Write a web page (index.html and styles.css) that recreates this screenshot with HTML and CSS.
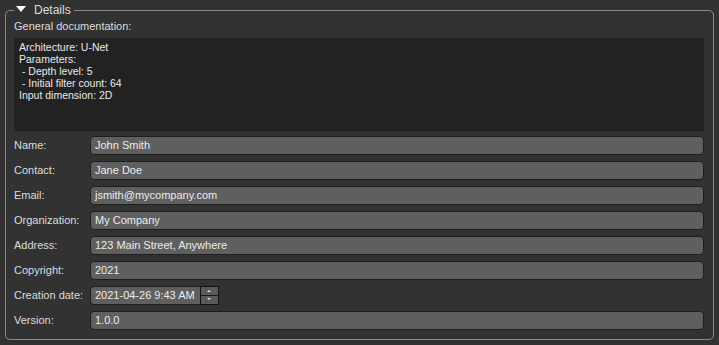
FILE: index.html
```html
<!DOCTYPE html>
<html lang="en">
<head>
    <meta charset="UTF-8">
    <title>Model details</title>
    <link rel="stylesheet" href="styles.css">
</head>
<body>
<fieldset class="details">
    <legend><span class="arrow"></span>Details</legend>
    <div class="doc-label">General documentation:</div>
    <div class="doc">Architecture: U-Net
Parameters:
 - Depth level: 5
 - Initial filter count: 64
Input dimension: 2D</div>
    <div class="form">
        <label>Name:</label>
        <div class="field">John Smith</div>
        <label>Contact:</label>
        <div class="field">Jane Doe</div>
        <label>Email:</label>
        <div class="field">jsmith@mycompany.com</div>
        <label>Organization:</label>
        <div class="field">My Company</div>
        <label>Address:</label>
        <div class="field">123 Main Street, Anywhere</div>
        <label>Copyright:</label>
        <div class="field">2021</div>
        <label>Creation date:</label>
        <div class="date-row">
            <div class="field date">2021-04-26 9:43 AM</div>
            <div class="spin">
                <span class="up"></span>
                <span class="down"></span>
            </div>
        </div>
        <label>Version:</label>
        <div class="field">1.0.0</div>
    </div>
</fieldset>
</body>
</html>
```

FILE: styles.css
```css
body {
    margin: 0;
    background: #323232;
    color: #dcdcdc;
    font-family: "Liberation Sans", Arial, sans-serif;
    font-size: 11px;
    height: 345px;
    overflow: hidden;
}

.details {
    margin: 3px 5px 0 5px;
    height: 337px;
    box-sizing: border-box;
    border: 1px solid #8a8a8a;
    border-radius: 5px;
    padding: 0 8px 0 8px;
}

.details > legend {
    padding: 0 3px 0 2px;
    margin-left: 0;
    font-size: 12px;
    color: #dcdcdc;
    line-height: 14px;
}

.arrow {
    display: inline-block;
    width: 0;
    height: 0;
    border-left: 5px solid transparent;
    border-right: 5px solid transparent;
    border-top: 6px solid #ffffff;
    margin-right: 8px;
    vertical-align: 2px;
}

.doc-label {
    margin-top: 2px;
    height: 15px;
    line-height: 15px;
}

.doc {
    margin-top: 4px;
    height: 93px;
    background: #222222;
    white-space: pre;
    font-size: 10.5px;
    line-height: 12px;
    padding: 3px 5px;
    box-sizing: border-box;
    margin-right: 1px;
    color: #e8e8e8;
}

.form {
    margin-top: 5px;
    display: grid;
    grid-template-columns: 76px 1fr;
    row-gap: 6px;
    align-items: center;
    margin-right: 1px;
}

.form > label {
    line-height: 19px;
}

.field {
    height: 19px;
    box-sizing: border-box;
    background: #5f5f5f;
    border: 1px solid #1e1e1e;
    border-radius: 4px;
    padding: 0 4px;
    line-height: 17px;
    color: #ececec;
}

.date-row {
    display: flex;
    align-items: center;
}

.field.date {
    width: 110px;
    border-radius: 4px 0 0 4px;
    border-right: none;
}

.spin {
    width: 17px;
    height: 17px;
    border: 1px solid #111;
    background: #1a1a1a;
    display: flex;
    flex-direction: column;
    gap: 1px;
    padding: 0;
}

.spin > span {
    flex: 1;
    background: #5a5a5a;
    position: relative;
}

.spin .up::after,
.spin .down::after {
    content: "";
    position: absolute;
    left: 6px;
    top: 3px;
    border-left: 2px solid transparent;
    border-right: 2px solid transparent;
}

.spin .up::after {
    border-bottom: 2px solid #e0e0e0;
}

.spin .down::after {
    top: 2px;
    border-top: 2px solid #e0e0e0;
}
```
